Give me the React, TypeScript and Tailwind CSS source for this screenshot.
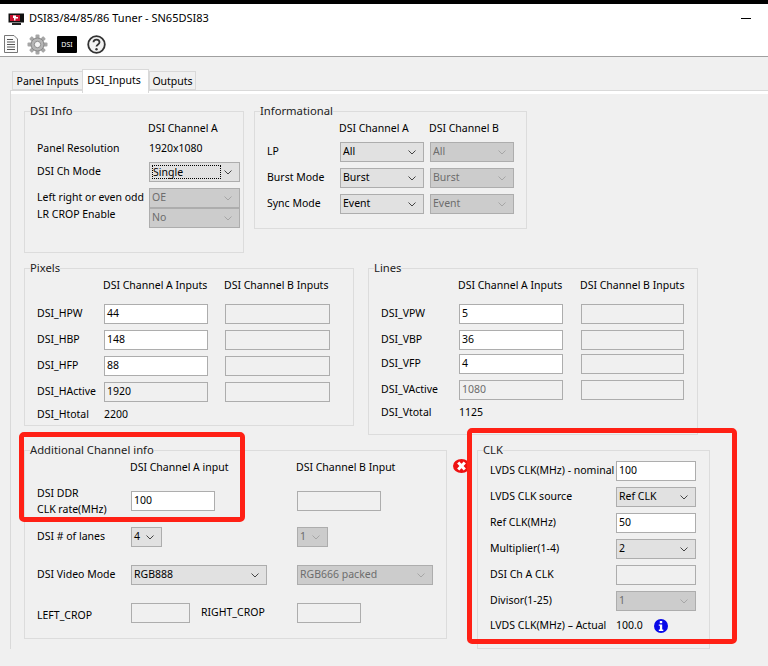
import React from "react";

const Chevron = ({ disabled }: { disabled?: boolean }) => (
  <svg width="8" height="5" viewBox="0 0 8 5" className="shrink-0" fill="none">
    <path d="M0.5 0.5 L4 4 L7.5 0.5" stroke={disabled ? "#a6a6a6" : "#444444"} strokeWidth="1" />
  </svg>
);

const Combo = ({ value, w, disabled, focused }: { value: string; w: string; disabled?: boolean; focused?: boolean }) => (
  <div
    className={`${w} h-5 shrink-0 flex items-center justify-between border border-[#adadad] pl-[2px] pr-[7px] ${
      disabled ? "bg-[#cccccc] text-[#6d6d6d]" : "bg-[#e1e1e1] text-black"
    }`}
  >
    {focused ? (
      <span className="w-[69px] h-[14px] flex items-center border border-dotted border-black leading-none">{value}</span>
    ) : (
      <span>{value}</span>
    )}
    <Chevron disabled={disabled} />
  </div>
);

const Field = ({ value, w, ro, muted }: { value?: string; w: string; ro?: boolean; muted?: boolean }) => (
  <div
    className={`${w} h-5 shrink-0 flex items-center border border-[#adadad] pl-[2px] ${ro ? "bg-[#f0f0f0]" : "bg-white"} ${
      muted ? "text-[#6d6d6d]" : "text-black"
    }`}
  >
    {value}
  </div>
);

const Group = ({ title, size, children }: { title: string; size: string; children: React.ReactNode }) => (
  <section className={`${size} shrink-0 border border-[#dcdcdc]`}>
    <h3 className="-mt-[9px] mb-px ml-[5px] w-fit h-4 leading-4 bg-[#f0f0f0] text-[11.25px] text-[#222222]">{title}</h3>
    {children}
  </section>
);

const Row = ({ mt, children }: { mt: string; children: React.ReactNode }) => (
  <div className={`${mt} h-5 flex items-center`}>{children}</div>
);

const DocIcon = () => (
  <svg width="16" height="18" viewBox="0 0 16 18">
    <path d="M1.5 0.5 H11 L14.5 4 V17.5 H1.5 Z" fill="#fbfbfb" stroke="#777777" />
    <path d="M4 4.5H10M4 7H12M4 9.5H12M4 12H12M4 14.5H12" stroke="#555555" />
  </svg>
);

const GearIcon = () => (
  <svg width="21" height="21" viewBox="0 0 21 21">
    <g fill="#a6a6a6">
      <rect x="8.5" y="0.5" width="4" height="20" rx="1" />
      <rect x="8.5" y="0.5" width="4" height="20" rx="1" transform="rotate(45 10.5 10.5)" />
      <rect x="8.5" y="0.5" width="4" height="20" rx="1" transform="rotate(90 10.5 10.5)" />
      <rect x="8.5" y="0.5" width="4" height="20" rx="1" transform="rotate(135 10.5 10.5)" />
    </g>
    <circle cx="10.5" cy="10.5" r="6.5" fill="#b5b5b5" stroke="#8a8a8a" />
    <circle cx="10.5" cy="10.5" r="3.2" fill="#f4f4f4" stroke="#8a8a8a" />
  </svg>
);

const HelpIcon = () => (
  <svg width="19" height="19" viewBox="0 0 19 19" fill="none">
    <circle cx="9.5" cy="9.5" r="8.3" fill="#f2f2f2" stroke="#333333" strokeWidth="1.8" />
    <path d="M6.5 7.3 C6.5 3.8 12.5 3.8 12.5 7.3 C12.5 9.4 9.5 9.4 9.5 11.6" stroke="#333333" strokeWidth="1.8" />
    <circle cx="9.5" cy="14.2" r="1.2" fill="#333333" />
  </svg>
);

const AppIcon = () => (
  <svg width="17" height="12" viewBox="0 0 17 12">
    <rect x="0.5" y="0.5" width="15.5" height="9" fill="#111111" />
    <rect x="2" y="2" width="10" height="6" fill="#c8102e" />
    <path d="M5 2.5H8V4H10V5.5H7.5V7.5H6V5H5Z" fill="#ffffff" />
    <rect x="4" y="10" width="9" height="2" fill="#222222" />
  </svg>
);

const ErrorIcon = () => (
  <svg width="17" height="14" viewBox="0 0 17 14">
    <ellipse cx="8.5" cy="7" rx="8.5" ry="7" fill="#ee1111" />
    <path d="M5.2 3.4 L11.8 10.6 M11.8 3.4 L5.2 10.6" stroke="#ffffff" strokeWidth="3" />
  </svg>
);

const InfoIcon = () => (
  <svg width="14" height="14" viewBox="0 0 14 14" className="mt-[2px]">
    <circle cx="7" cy="7" r="7" fill="#0808e8" />
    <rect x="5.8" y="2" width="2.4" height="2.2" fill="#ffffff" />
    <path d="M4.8 5.4H8.2V10.6H9.3V12H4.8V10.6H5.9V6.8H4.8Z" fill="#ffffff" />
  </svg>
);

const Tab = ({ label, active, cls }: { label: string; active?: boolean; cls: string }) => (
  <div
    className={`${cls} border border-[#d9d9d9] ${
      active ? "bg-white h-6 border-b-0 z-10 -mb-[3px] pb-[3px] pr-[3px]" : "bg-[#f0f0f0] h-[19px] border-r-0 last:border-r"
    } flex items-center justify-center leading-4 text-black`}
  >
    {label}
  </div>
);

export default function App() {
  return (
    <div className="relative w-[768px] h-[666px] overflow-hidden whitespace-nowrap bg-[#f0f0f0] text-[10.5px] text-black font-['Noto_Sans',sans-serif]">
      <header className="bg-white border-t-4 border-black border-b border-b-[#a0a0a0] h-[57px]">
        <div className="h-[29px] flex items-center pl-2 pr-[17px]">
          <AppIcon />
          <span className="ml-1 flex-1 text-[11px]">DSI83/84/85/86 Tuner - SN65DSI83</span>
          <span className="w-[10px] h-px bg-black" />
        </div>
        <div className="h-[22px] flex items-center pl-[3px]">
          <DocIcon />
          <span className="ml-2"><GearIcon /></span>
          <div className="ml-[9px] w-5 h-[17px] bg-black text-white text-[7px] leading-none flex items-center justify-center rounded-[1px]">DSI</div>
          <span className="ml-[10px]"><HelpIcon /></span>
        </div>
      </header>

      <div className="h-[33px] flex items-end pl-3">
        <Tab label="Panel Inputs" cls="w-[70px]" />
        <Tab label="DSI_Inputs" cls="w-[67px]" active />
        <Tab label="Outputs" cls="w-[47px]" />
      </div>

      <main className="ml-[10px] border-l border-t border-[#d9d9d9]">
        <div className="h-[3px] bg-white" />
        <div className="pl-[13px] pt-[17px]">
          <div className="flex items-start gap-[10px]">
            <Group title="DSI Info" size="w-[220px] h-[142px]">
              <div className="pl-3">
                <div className="h-[17px] leading-4 pl-[111px]">DSI Channel A</div>
                <div className="mt-[3px] h-[17px] leading-4 flex"><span className="w-[112px]">Panel Resolution</span><span>1920x1080</span></div>
                <Row mt="mt-[5px]"><span className="w-[112px]">DSI Ch Mode</span><Combo value="Single" w="w-[91px]" focused /></Row>
                <Row mt="mt-[6px]"><span className="w-[112px]">Left right or even odd</span><Combo value="OE" w="w-[91px]" disabled /></Row>
                <Row mt="mt-0"><span className="w-[112px] pb-[6px]">LR CROP Enable</span><Combo value="No" w="w-[91px]" disabled /></Row>
              </div>
            </Group>
            <Group title="Informational" size="w-[273px] h-[118px]">
              <div className="pl-3">
                <div className="h-[17px] leading-4 flex pl-[72px]"><span className="w-[90px]">DSI Channel A</span><span>DSI Channel B</span></div>
                {[
                  ["LP", "All", "mt-[5px]"],
                  ["Burst Mode", "Burst", "mt-[6px]"],
                  ["Sync Mode", "Event", "mt-[6px]"],
                ].map(([l, v, m]) => (
                  <Row key={l} mt={m}>
                    <span className="w-[73px]">{l}</span>
                    <Combo value={v} w="w-[84px]" />
                    <span className="w-[6px]" />
                    <Combo value={v} w="w-[84px]" disabled />
                  </Row>
                ))}
              </div>
            </Group>
          </div>

          <div className="mt-[15px] flex items-start gap-[14px]">
            <Group title="Pixels" size="w-[330px] h-[158px]">
              <div className="pl-3">
                <div className="h-[17px] leading-4 flex pl-[66px]"><span className="w-[121px]">DSI Channel A Inputs</span><span>DSI Channel B Inputs</span></div>
                {[
                  ["DSI_HPW", "44", false, "mt-[10px]"],
                  ["DSI_HBP", "148", false, "mt-[6px]"],
                  ["DSI_HFP", "88", false, "mt-[6px]"],
                  ["DSI_HActive", "1920", true, "mt-[6px]"],
                ].map(([l, v, ro, m]) => (
                  <Row key={l as string} mt={m as string}>
                    <span className="w-[67px]">{l}</span>
                    <Field value={v as string} w="w-[104px]" ro={ro as boolean} />
                    <span className="w-[17px]" />
                    <Field w="w-[105px]" ro />
                  </Row>
                ))}
                <div className="mt-1 h-4 leading-4 flex"><span className="w-[67px]">DSI_Htotal</span><span>2200</span></div>
              </div>
            </Group>
            <Group title="Lines" size="w-[330px] h-[167px]">
              <div className="pl-3">
                <div className="h-[17px] leading-4 flex pl-[77px]"><span className="w-[122px]">DSI Channel A Inputs</span><span>DSI Channel B Inputs</span></div>
                {[
                  ["DSI_VPW", "5", false, "mt-[10px]"],
                  ["DSI_VBP", "36", false, "mt-[6px]"],
                  ["DSI_VFP", "4", false, "mt-1"],
                  ["DSI_VActive", "1080", true, "mt-[6px]"],
                ].map(([l, v, ro, m]) => (
                  <Row key={l as string} mt={m as string}>
                    <span className="w-[78px]">{l}</span>
                    <Field value={v as string} w="w-[104px]" ro={ro as boolean} muted={ro as boolean} />
                    <span className="w-[18px]" />
                    <Field w="w-[103px]" ro />
                  </Row>
                ))}
                <div className="mt-1 h-4 leading-4 flex"><span className="w-[78px]">DSI_Vtotal</span><span>1125</span></div>
              </div>
            </Group>
          </div>

          <div className="mt-[15px] flex items-start gap-[30px]">
            <Group title="Additional Channel info" size="w-[423px] h-[189px]">
              <div className="pl-3">
                <div className="h-[17px] leading-4 flex pl-[93px]"><span className="w-[166px]">DSI Channel A input</span><span>DSI Channel B Input</span></div>
                <Row mt="mt-[15px]">
                  <span className="w-[94px] leading-4">DSI DDR<br />CLK rate(MHz)</span>
                  <Field value="100" w="w-[84px]" />
                  <span className="w-[82px]" />
                  <Field w="w-[84px]" ro />
                </Row>
                <Row mt="mt-4">
                  <span className="w-[94px]">DSI # of lanes</span>
                  <Combo value="4" w="w-[31px]" />
                  <span className="w-[135px]" />
                  <Combo value="1" w="w-[31px]" disabled />
                </Row>
                <Row mt="mt-[18px]">
                  <span className="w-[94px]">DSI Video Mode</span>
                  <Combo value="RGB888" w="w-[136px]" />
                  <span className="w-[30px]" />
                  <Combo value="RGB666 packed" w="w-[136px]" disabled />
                </Row>
                <Row mt="mt-[18px]">
                  <span className="w-[94px] pt-[6px]">LEFT_CROP</span>
                  <Field w="w-[59px]" ro />
                  <span className="w-[11px]" />
                  <span className="w-[96px]">RIGHT_CROP</span>
                  <Field w="w-[64px]" ro />
                </Row>
              </div>
            </Group>
            <Group title="CLK" size="w-[233px] h-[199px]">
              <div className="pl-3">
                <Row mt="mt-[3px]"><span className="w-[126px]">LVDS CLK(MHz) - nominal</span><Field value="100" w="w-20" /></Row>
                <Row mt="mt-[6px]"><span className="w-[126px]">LVDS CLK source</span><Combo value="Ref CLK" w="w-20" /></Row>
                <Row mt="mt-[6px]"><span className="w-[126px]">Ref CLK(MHz)</span><Field value="50" w="w-20" /></Row>
                <Row mt="mt-[6px]"><span className="w-[126px]">Multiplier(1-4)</span><Combo value="2" w="w-20" /></Row>
                <Row mt="mt-[6px]"><span className="w-[126px]">DSI Ch A CLK</span><Field w="w-20" ro /></Row>
                <Row mt="mt-[6px]"><span className="w-[126px]">Divisor(1-25)</span><Combo value="1" w="w-20" disabled /></Row>
                <div className="mt-[6px] h-4 leading-4 flex items-center">
                  <span className="w-[126px]">LVDS CLK(MHz) – Actual</span>
                  <span className="w-[38px]">100.0</span>
                  <InfoIcon />
                </div>
              </div>
            </Group>
          </div>
        </div>
      </main>

      <div className="absolute left-[453px] top-[459px]"><ErrorIcon /></div>
      <div className="absolute left-[19px] top-[432px] w-[226px] h-[90px] border-[5px] border-[#ff2015] rounded-[5px]" />
      <div className="absolute left-[467px] top-[428px] w-[270px] h-[216px] border-[5px] border-[#ff2015] rounded-[5px]" />
    </div>
  );
}
